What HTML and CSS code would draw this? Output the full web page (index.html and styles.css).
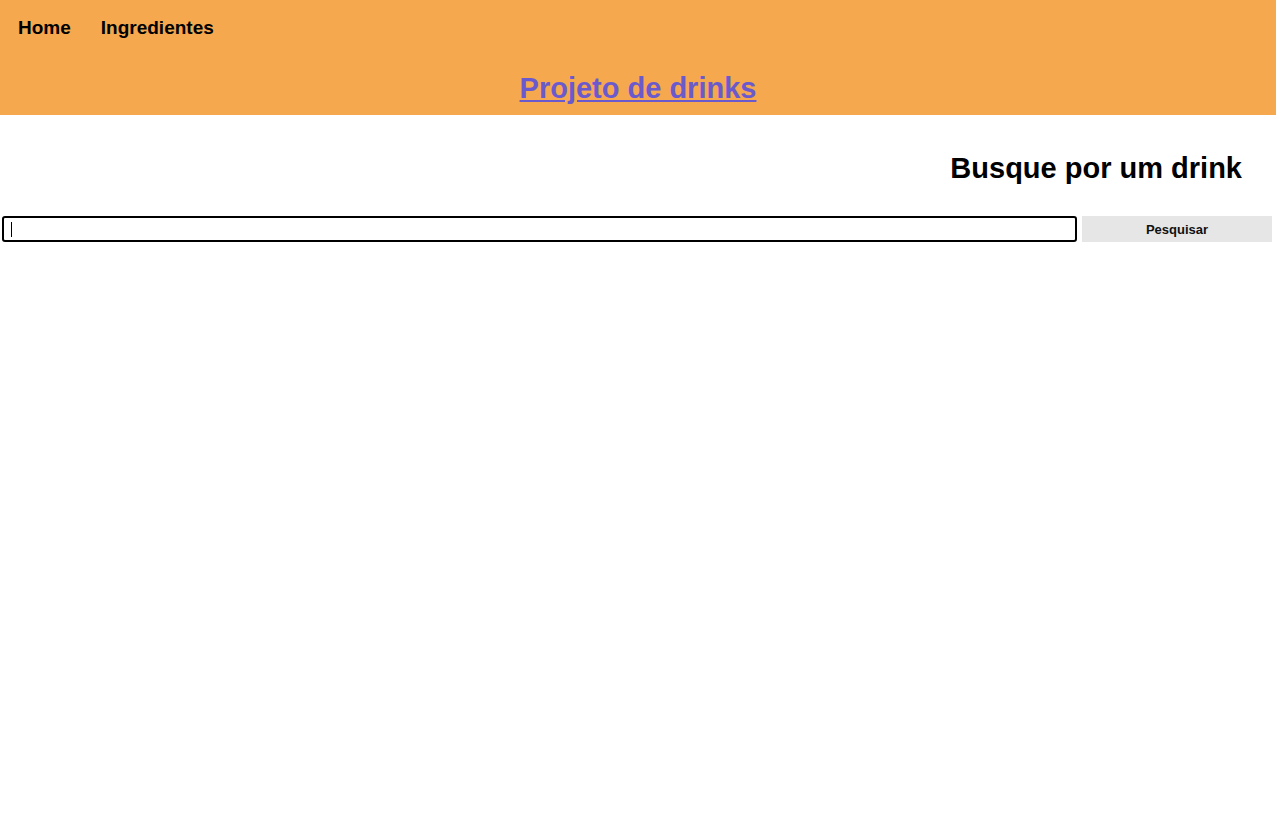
FILE: index.html
```html
<!DOCTYPE html>
<html lang="pt">
<head>
<meta charset="utf-8">
<title>Projeto de drinks</title>
<link rel="stylesheet" href="styles.css">
</head>
<body>
<header class="header">
  <nav class="nav">
    <a class="nav-link" href="#">Home</a>
    <a class="nav-link" href="#">Ingredientes</a>
  </nav>
  <h1 class="title"><a href="#">Projeto de drinks</a></h1>
</header>
<main class="main">
  <h2 class="search-title">Busque por um drink</h2>
  <form class="search-row" onsubmit="return false">
    <input class="search-input" type="text" autofocus>
    <button class="search-btn" type="submit">Pesquisar</button>
  </form>
</main>
</body>
</html>
```

FILE: styles.css
```css
* { box-sizing: border-box; }
html, body { margin: 0; padding: 0; background: #fff; }
body { font-family: "Liberation Sans", Arial, sans-serif; color: #000; }

.header {
  background: #f6a84f;
  height: 115px;
  display: flex;
  flex-direction: column;
}
.nav {
  display: flex;
  gap: 30px;
  padding: 16px 0 0 18px;
}
.nav-link {
  color: #000;
  text-decoration: none;
  font-weight: bold;
  font-size: 19px;
  line-height: 24px;
}
.title {
  margin: 0;
  padding-top: 31px;
  text-align: center;
  font-size: 29px;
  line-height: 34px;
  font-weight: bold;
}
.title a { color: #6a5acd; text-decoration: underline; }

.search-title {
  margin: 0;
  padding: 36px 34px 0 0;
  text-align: right;
  font-size: 29px;
  line-height: 34px;
  font-weight: bold;
}
.search-row {
  display: flex;
  gap: 5px;
  margin: 31px 4px 0 2px;
  height: 26px;
}
.search-input {
  flex: 1;
  height: 26px;
  border: 2px solid #000;
  border-radius: 3px;
  outline: none;
  padding: 0 7px;
  font-size: 13px;
  font-family: "Liberation Sans", Arial, sans-serif;
  background: #fff linear-gradient(#000, #000) no-repeat 7px center / 1px 15px;
}
.search-btn {
  width: 190px;
  height: 26px;
  border: none;
  background: #e6e6e6;
  font-family: "Liberation Sans", Arial, sans-serif;
  font-weight: bold;
  font-size: 13px;
  color: #111;
  padding: 0;
}
```
